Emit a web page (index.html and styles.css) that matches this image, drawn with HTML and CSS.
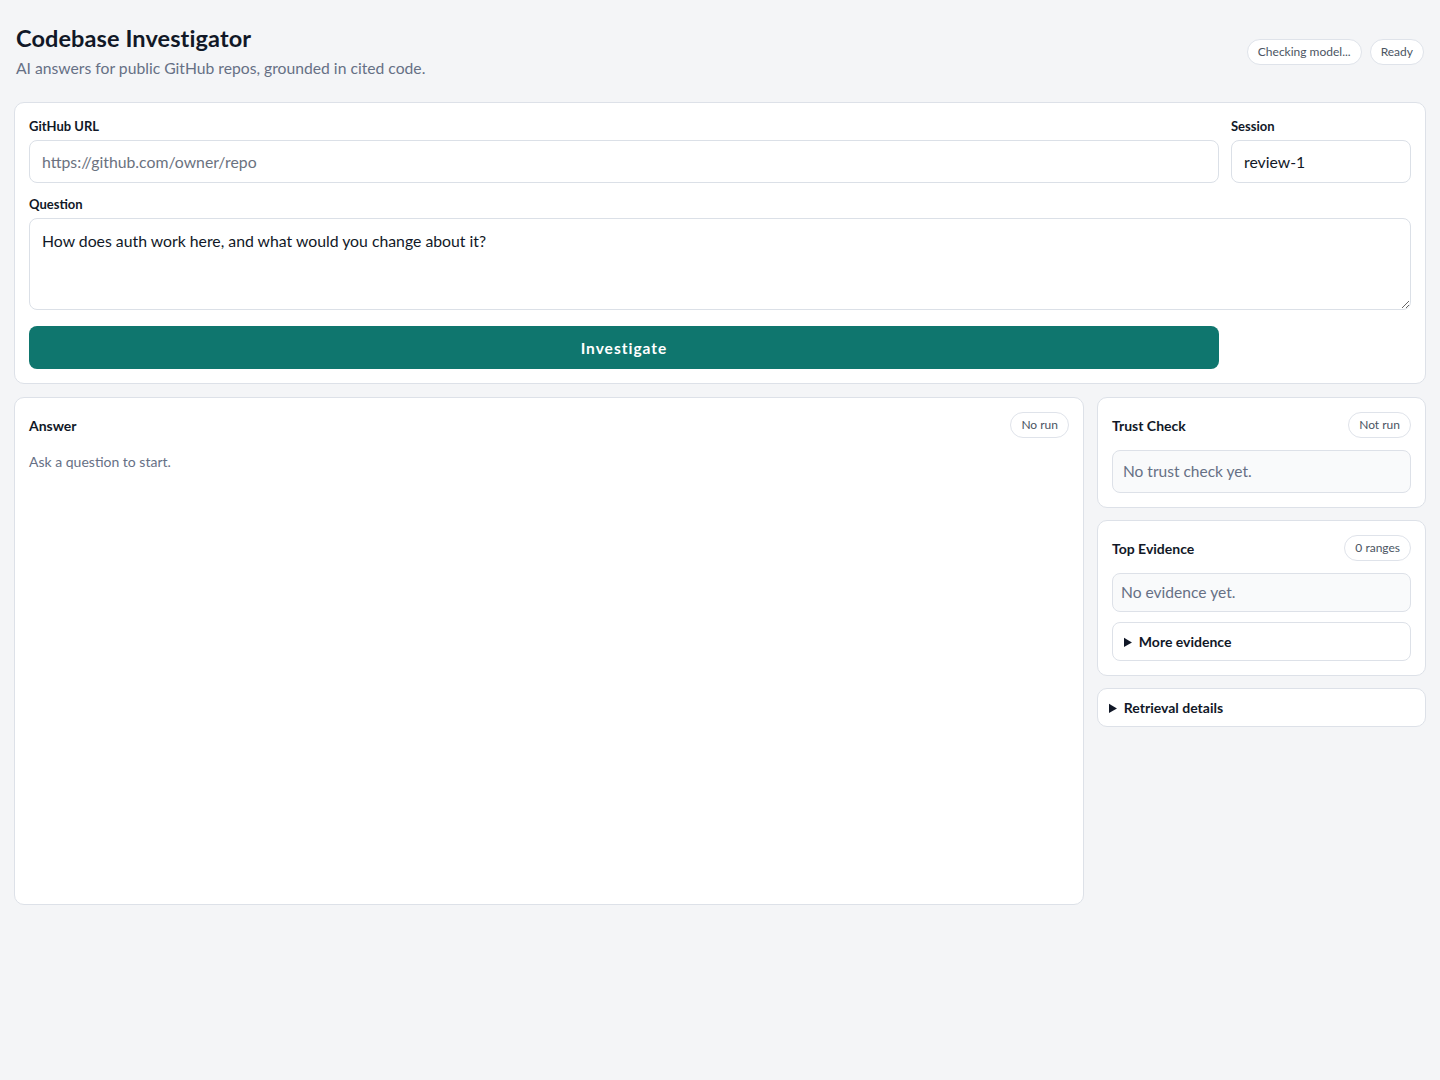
FILE: index.html
```html
<!DOCTYPE html>
<html lang="en">
<head>
    <meta charset="UTF-8">
    <meta name="viewport" content="width=device-width, initial-scale=1.0">
    <title>Codebase Investigator</title>
    <link rel="stylesheet" href="styles.css">
</head>
<body>
    <header class="top">
        <div>
            <h1>Codebase Investigator</h1>
            <p class="sub">AI answers for public GitHub repos, grounded in cited code.</p>
        </div>
        <div class="status">
            <span class="pill">Checking model...</span>
            <span class="pill">Ready</span>
        </div>
    </header>

    <form class="card ask" onsubmit="return false">
        <div class="field">
            <label for="repo">GitHub URL</label>
            <input id="repo" type="text" placeholder="https://github.com/owner/repo">
        </div>
        <div class="field">
            <label for="session">Session</label>
            <input id="session" type="text" value="review-1">
        </div>
        <div class="field wide">
            <label for="question">Question</label>
            <textarea id="question">How does auth work here, and what would you change about it?</textarea>
        </div>
        <button class="go" type="submit">Investigate</button>
    </form>

    <div class="results">
        <section class="card answer">
            <div class="card-head">
                <h2>Answer</h2>
                <span class="pill">No run</span>
            </div>
            <p class="muted">Ask a question to start.</p>
        </section>

        <div class="side">
            <section class="card">
                <div class="card-head">
                    <h2>Trust Check</h2>
                    <span class="pill">Not run</span>
                </div>
                <div class="empty big">No trust check yet.</div>
            </section>

            <section class="card">
                <div class="card-head">
                    <h2>Top Evidence</h2>
                    <span class="pill">0 ranges</span>
                </div>
                <div class="empty">No evidence yet.</div>
                <details class="more">
                    <summary>More evidence</summary>
                </details>
            </section>

            <details class="card retrieval">
                <summary>Retrieval details</summary>
            </details>
        </div>
    </div>
</body>
</html>
```

FILE: styles.css
```css
* {
    box-sizing: border-box;
}
body {
    margin: 0;
    padding: 14px;
    background: #f4f5f7;
    color: #111827;
    font-family: 'Lato', 'Noto Sans', sans-serif;
}
.top {
    display: flex;
    justify-content: space-between;
    align-items: center;
    padding: 10px 2px 9px;
    margin-bottom: 14px;
}
h1 {
    margin: 0;
    font-size: 23.5px;
    line-height: 28px;
    font-weight: 700;
    letter-spacing: 0.1px;
}
.sub {
    margin: 5px 0 0;
    font-size: 15.7px;
    color: #667085;
    line-height: 22px;
}
.status {
    display: flex;
    gap: 8px;
}
.pill {
    display: inline-block;
    border: 1px solid #dfe3ea;
    border-radius: 999px;
    background: #fff;
    padding: 4px 10px;
    font-size: 12px;
    line-height: 16px;
    color: #4b5563;
}
.card {
    background: #fff;
    border: 1px solid #dde1e8;
    border-radius: 10px;
    padding: 14px;
}
.ask {
    display: grid;
    grid-template-columns: 1fr 180px;
    gap: 12px;
}
.field label {
    display: block;
    font-size: 13px;
    font-weight: 700;
    line-height: 18px;
    margin-bottom: 5px;
}
.wide {
    grid-column: 1 / -1;
}
input, textarea {
    width: 100%;
    border: 1px solid #dbe0e7;
    border-radius: 8px;
    font-family: inherit;
    font-size: 15.8px;
    color: #111827;
    padding: 0 12px;
    background: #fff;
}
input {
    height: 43px;
}
input::placeholder {
    color: #6b7280;
}
textarea {
    height: 92px;
    padding: 11px 12px;
    line-height: 22px;
    resize: vertical;
    display: block;
}
.go {
    margin-top: 4px;
    height: 43px;
    border: none;
    border-radius: 8px;
    background: #0f766e;
    color: #fff;
    font-family: inherit;
    font-size: 15.5px;
    font-weight: 700;
    letter-spacing: 1px;
    cursor: pointer;
}
.results {
    display: grid;
    grid-template-columns: 1fr 329px;
    gap: 13px;
    margin-top: 13px;
    align-items: start;
}
.answer {
    min-height: 508px;
}
.side {
    display: flex;
    flex-direction: column;
    gap: 12px;
}
.card-head {
    display: flex;
    justify-content: space-between;
    align-items: center;
}
h2 {
    margin: 0;
    font-size: 14px;
    font-weight: 700;
}
.muted {
    margin: 13px 0 0;
    font-size: 14px;
    line-height: 21px;
    color: #667085;
}
.empty {
    margin-top: 12px;
    border: 1px solid #dde1e8;
    border-radius: 8px;
    background: #f9fafb;
    color: #667085;
    font-size: 15.6px;
    height: 39px;
    line-height: 37px;
    padding: 0 8px;
}
.empty.big {
    height: 43px;
    line-height: 41px;
    font-size: 15.5px;
    padding: 0 10px;
}
.more {
    margin-top: 10px;
    border: 1px solid #dde1e8;
    border-radius: 8px;
    height: 39px;
    padding: 0 11px;
}
summary {
    font-size: 14px;
    font-weight: 700;
    line-height: 37px;
    cursor: pointer;
}
.retrieval {
    padding: 0 11px;
}
```
